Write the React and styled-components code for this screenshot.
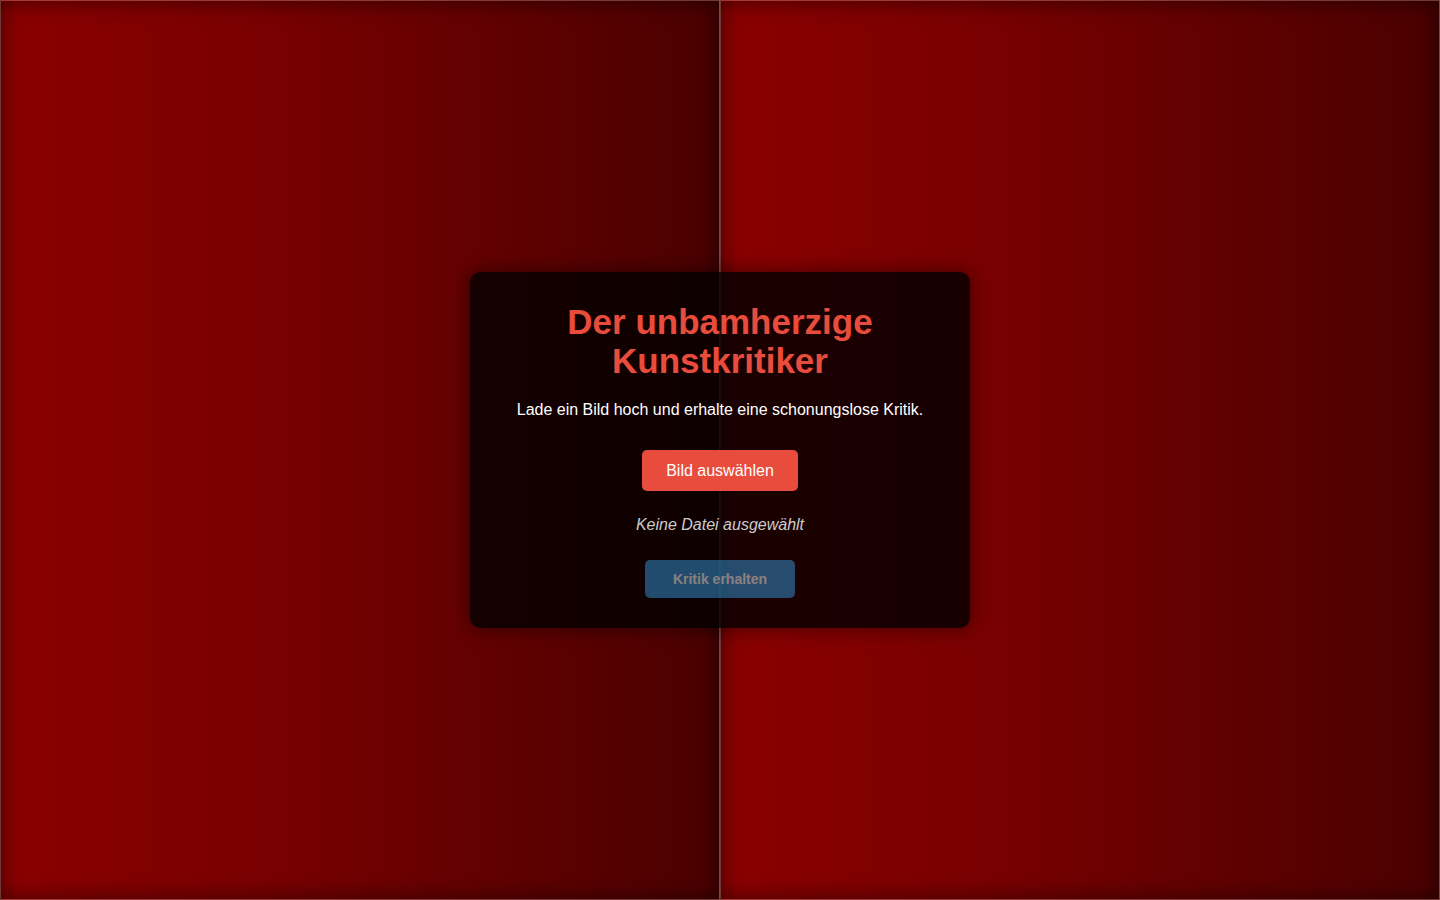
import React from "react";
import styled, { createGlobalStyle } from "styled-components";

const GlobalStyle = createGlobalStyle`
  html, body {
    margin: 0;
    padding: 0;
    background: #1a0000;
    font-family: "Liberation Sans", Arial, sans-serif;
  }
`;

const Stage = styled.div`
  display: grid;
  width: 100vw;
  height: 100vh;
  overflow: hidden;
`;

const CurtainRow = styled.div`
  grid-area: 1 / 1;
  display: flex;
`;

const Curtain = styled.div`
  flex: 1;
  border: 1px solid rgba(255, 255, 255, 0.22);
  background: linear-gradient(to right, #8b0000 0%, #7a0000 35%, #4a0000 100%);
  box-shadow: inset 0 0 22px rgba(0, 0, 0, 0.55);
`;

const Center = styled.div`
  grid-area: 1 / 1;
  display: flex;
  align-items: center;
  justify-content: center;
`;

const Card = styled.div`
  width: 500px;
  box-sizing: border-box;
  padding: 30px;
  border-radius: 10px;
  background: rgba(0, 0, 0, 0.8);
  box-shadow: 0 0 20px rgba(0, 0, 0, 0.5);
  text-align: center;
  display: flex;
  flex-direction: column;
  align-items: center;
`;

const Title = styled.h1`
  margin: 0 0 21px;
  font-size: 35px;
  line-height: 39px;
  font-weight: bold;
  color: #e74c3c;
`;

const Lead = styled.p`
  margin: 0 0 31px;
  font-size: 16px;
  line-height: 18px;
  color: #ffffff;
`;

const Button = styled.button`
  font-family: inherit;
  border: none;
  border-radius: 5px;
  color: #ffffff;
  cursor: pointer;
  background: ${(p) => (p.$variant === "blue" ? "#3498db" : "#e74c3c")};
  font-size: ${(p) => (p.$variant === "blue" ? "14px" : "16px")};
  font-weight: ${(p) => (p.$variant === "blue" ? "bold" : "normal")};
  padding: ${(p) => (p.$variant === "blue" ? "11px 28px" : "12px 24px")};
  line-height: ${(p) => (p.$variant === "blue" ? "16px" : "17px")};
  &:disabled {
    opacity: 0.5;
    cursor: not-allowed;
  }
`;

const FileName = styled.p`
  margin: 25px 0 26px;
  font-size: 16px;
  line-height: 18px;
  font-style: italic;
  color: #cccccc;
`;

export default function App() {
  return (
    <Stage>
      <GlobalStyle />
      <CurtainRow>
        <Curtain />
        <Curtain />
      </CurtainRow>
      <Center>
        <Card>
          <Title>
            Der unbamherzige
            <br />
            Kunstkritiker
          </Title>
          <Lead>Lade ein Bild hoch und erhalte eine schonungslose Kritik.</Lead>
          <Button>Bild auswählen</Button>
          <FileName>Keine Datei ausgewählt</FileName>
          <Button $variant="blue" disabled>
            Kritik erhalten
          </Button>
        </Card>
      </Center>
    </Stage>
  );
}
